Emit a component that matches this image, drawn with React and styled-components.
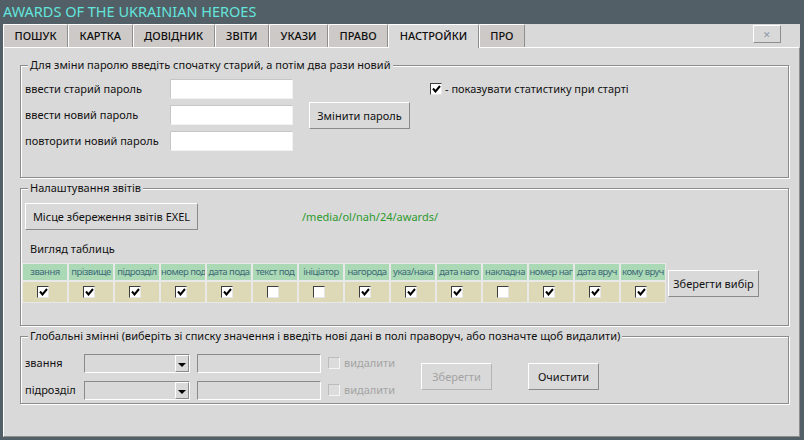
import React from "react";
import styled, { createGlobalStyle } from "styled-components";

const GlobalStyle = createGlobalStyle`
  html, body {
    margin: 0;
    padding: 0;
    background: #525f66;
  }
  body {
    font-family: "Noto Sans", "Open Sans", sans-serif;
    font-size: 11px;
    color: #111111;
  }
  * {
    box-sizing: border-box;
  }
`;

const Window = styled.div`
  width: 804px;
  height: 440px;
  background: #525f66;
  display: flex;
  flex-direction: column;
  padding: 0 4px 3px 3px;
`;

const TitleBar = styled.div`
  height: 24px;
  line-height: 23px;
  color: #63e4dc;
  font-size: 14.5px;
  white-space: nowrap;
`;

const Notebook = styled.div`
  flex: 1;
  display: flex;
  flex-direction: column;
  background: #d9d9d9;
`;

const TabStrip = styled.div`
  display: flex;
  align-items: flex-start;
  height: 23px;
`;

const Tab = styled.div`
  position: relative;
  z-index: ${(p) => (p.$active ? 1 : 0)};
  height: ${(p) => (p.$active ? 24 : 23)}px;
  padding: 0 10.5px;
  line-height: 21px;
  font-size: 11px;
  font-weight: 500;
  color: #0e0e0e;
  background: ${(p) => (p.$active ? "#d9d9d9" : "#cdc9c6")};
  border-top: 1px solid #ffffff;
  border-left: 1px solid #ffffff;
  border-right: 1px solid #8e8e8e;
  border-radius: 2px 2px 0 0;
  white-space: nowrap;
`;

const CloseButton = styled.div`
  margin: 1px 19px 0 auto;
  width: 28px;
  height: 18px;
  display: flex;
  align-items: center;
  justify-content: center;
  background: #d9d9d9;
  border: 1px solid;
  border-color: #ffffff #8e8e8e #8e8e8e #ffffff;
  color: #8c98a6;
  font-size: 9px;
  line-height: 1;
`;

const Panel = styled.div`
  flex: 1;
  display: flex;
  flex-direction: column;
  gap: 2px;
  padding: 9px 10px 0 16px;
  border: 1px solid;
  border-color: #ffffff #8e8e8e #8e8e8e #ffffff;
`;

const Frame = styled.fieldset`
  margin: 0;
  min-width: 0;
  height: ${(p) => p.$h}px;
  padding: ${(p) => p.$pad};
  border: 1px solid #8c8c8c;
  box-shadow: inset 1px 1px 0 #ffffff, 1px 1px 0 #ffffff;
`;

const Legend = styled.legend`
  margin-left: 3px;
  padding: 0 2px;
  line-height: 16px;
  font-size: 11px;
  background: #d9d9d9;
  white-space: nowrap;
`;

const Label = styled.span`
  font-size: 11px;
  line-height: 20px;
  white-space: nowrap;
  color: ${(p) => (p.$muted ? "#a4a4a4" : "#111111")};
`;

const PasswordGrid = styled.div`
  display: grid;
  grid-template-columns: 145px 123px 137px 1fr;
  grid-template-rows: repeat(3, 20px);
  row-gap: 6px;
  align-items: center;
`;

const Entry = styled.input`
  width: 123px;
  height: 20px;
  padding: 0 2px;
  border: 1px solid;
  border-color: #c6c6c6 #f2f2f2 #f2f2f2 #c6c6c6;
  background: #ffffff;
  font: inherit;
  outline: none;
`;

const Button = styled.div`
  display: inline-flex;
  align-items: center;
  justify-content: center;
  flex: none;
  width: ${(p) => p.$w}px;
  height: 27px;
  background: #d9d9d9;
  border: 1px solid;
  font-size: 11px;
  color: ${(p) => (p.$disabled ? "#a3a3a3" : "#111111")};
  border-color: ${(p) =>
    p.$disabled
      ? "#ffffff #b4b4b4 #b4b4b4 #ffffff"
      : "#ffffff #8a8a8a #8a8a8a #ffffff"};
  white-space: nowrap;
`;

const ChangeButton = styled(Button)`
  grid-column: 3;
  grid-row: 2;
  margin-left: 16px;
`;

const CheckRow = styled.label`
  grid-column: 4;
  grid-row: 1;
  display: flex;
  align-items: center;
  gap: 3px;
`;

const Box = styled.span`
  display: inline-flex;
  align-items: center;
  justify-content: center;
  flex: none;
  width: 12px;
  height: 12px;
  border: 1px solid;
  border-color: ${(p) =>
    p.$disabled
      ? "#bcbcbc #f4f4f4 #f4f4f4 #bcbcbc"
      : "#3c3c3c #e6e6e6 #e6e6e6 #3c3c3c"};
  background: ${(p) => (p.$disabled ? "#dcdcdc" : "#ffffff")};
`;

const CheckBox = ({ checked, disabled }) => (
  <Box $disabled={disabled}>
    {checked && (
      <svg width="9" height="8" viewBox="0 0 9 8">
        <path d="M1 3.5 L3.5 6.5 L8 1" fill="none" stroke="#000" strokeWidth="2" />
      </svg>
    )}
  </Box>
);

const ReportTop = styled.div`
  display: flex;
  align-items: center;
  gap: 104px;
`;

const PathText = styled.span`
  color: #2c9a2c;
  font-size: 11px;
`;

const SectionTitle = styled.div`
  margin: 11px 0 6px 5px;
  line-height: 16px;
  font-size: 11px;
`;

const ColumnsRow = styled.div`
  display: flex;
  align-items: center;
  margin-left: -3px;
  gap: 2px;
`;

const ColumnsGrid = styled.div`
  display: grid;
  grid-template-columns: repeat(14, 46px);
  grid-template-rows: 18px 22px;
`;

const HeadCell = styled.div`
  background: #abd8b5;
  border: 1px solid #e8e8e8;
  font-size: 9.5px;
  letter-spacing: -0.5px;
  line-height: 15px;
  color: #3d6b78;
  text-align: center;
  white-space: nowrap;
  overflow: hidden;
`;

const CheckCell = styled.div`
  display: flex;
  align-items: center;
  justify-content: center;
  padding-right: 4px;
  background: #ddd8b6;
  border: 1px solid #e8e8e8;
`;

const GlobalBody = styled.div`
  display: flex;
  align-items: center;
`;

const GlobalGrid = styled.div`
  display: grid;
  grid-template-columns: 52px 106px 124px 80px;
  column-gap: 7px;
  row-gap: 7px;
  align-items: center;
`;

const Combo = styled.div`
  display: flex;
  height: 19px;
  border: 1px solid;
  border-color: #8a8a8a #ffffff #ffffff #8a8a8a;
  background: #d9d9d9;
`;

const ComboField = styled.div`
  flex: 1;
`;

const ComboArrow = styled.div`
  width: 14px;
  display: flex;
  align-items: flex-end;
  justify-content: center;
  padding-bottom: 4px;
  border: 1px solid;
  border-color: #ffffff #8a8a8a #8a8a8a #ffffff;

  &::after {
    content: "";
    border-left: 4px solid transparent;
    border-right: 4px solid transparent;
    border-top: 4px solid #000000;
  }
`;

const DisabledEntry = styled.div`
  height: 19px;
  border: 1px solid;
  border-color: #8a8a8a #ffffff #ffffff #8a8a8a;
  background: #d9d9d9;
`;

const DeleteCheck = styled.div`
  display: flex;
  align-items: center;
  gap: 4px;
`;

const GlobalButtons = styled.div`
  display: flex;
  gap: 36px;
  margin-left: 13px;
`;

const tabs = ["ПОШУК", "КАРТКА", "ДОВІДНИК", "ЗВІТИ", "УКАЗИ", "ПРАВО", "НАСТРОЙКИ", "ПРО"];

const columns = [
  ["звання", true],
  ["прізвище", true],
  ["підрозділ", true],
  ["номер под", true],
  ["дата пода", true],
  ["текст под", false],
  ["ініціатор", false],
  ["нагорода", true],
  ["указ/нака", true],
  ["дата наго", true],
  ["накладна", false],
  ["номер наг", true],
  ["дата вруч", true],
  ["кому вруч", true],
];

const passwordRows = ["ввести старий пароль", "ввести новий пароль", "повторити новий пароль"];

export default function App() {
  return (
    <>
      <GlobalStyle />
      <Window>
        <TitleBar>AWARDS OF THE UKRAINIAN HEROES</TitleBar>
        <Notebook>
          <TabStrip>
            {tabs.map((t) => (
              <Tab key={t} $active={t === "НАСТРОЙКИ"}>
                {t}
              </Tab>
            ))}
            <CloseButton>✕</CloseButton>
          </TabStrip>
          <Panel>
            <Frame $h={121} $pad="6px 4px 0 4px">
              <Legend>Для зміни паролю введіть спочатку старий, а потім два рази новий</Legend>
              <PasswordGrid>
                {passwordRows.map((r, i) => (
                  <React.Fragment key={r}>
                    <Label style={{ gridRow: i + 1, gridColumn: 1 }}>{r}</Label>
                    <Entry style={{ gridRow: i + 1, gridColumn: 2 }} />
                  </React.Fragment>
                ))}
                <ChangeButton $w={101}>Змінити пароль</ChangeButton>
                <CheckRow>
                  <CheckBox checked />
                  <Label>- показувати статистику при старті</Label>
                </CheckRow>
              </PasswordGrid>
            </Frame>

            <Frame $h={146} $pad="7px 4px 0 4px">
              <Legend>Налаштування звітів</Legend>
              <ReportTop>
                <Button $w={173}>Місце збереження звітів EXEL</Button>
                <PathText>/media/ol/nah/24/awards/</PathText>
              </ReportTop>
              <SectionTitle>Вигляд таблиць</SectionTitle>
              <ColumnsRow>
                <ColumnsGrid>
                  {columns.map(([name]) => (
                    <HeadCell key={name}>{name}</HeadCell>
                  ))}
                  {columns.map(([name, on]) => (
                    <CheckCell key={name + "-c"}>
                      <CheckBox checked={on} />
                    </CheckCell>
                  ))}
                </ColumnsGrid>
                <Button $w={91}>Зберегти вибір</Button>
              </ColumnsRow>
            </Frame>

            <Frame $h={76} $pad="9px 4px 0 4px">
              <Legend>
                Глобальні змінні (виберіть зі списку значення і введіть нові дані в полі праворуч, або позначте щоб видалити)
              </Legend>
              <GlobalBody>
                <GlobalGrid>
                  {["звання", "підрозділ"].map((r) => (
                    <React.Fragment key={r}>
                      <Label>{r}</Label>
                      <Combo>
                        <ComboField />
                        <ComboArrow />
                      </Combo>
                      <DisabledEntry />
                      <DeleteCheck>
                        <CheckBox disabled />
                        <Label $muted>видалити</Label>
                      </DeleteCheck>
                    </React.Fragment>
                  ))}
                </GlobalGrid>
                <GlobalButtons>
                  <Button $w={71} $disabled>
                    Зберегти
                  </Button>
                  <Button $w={71}>Очистити</Button>
                </GlobalButtons>
              </GlobalBody>
            </Frame>
          </Panel>
        </Notebook>
      </Window>
    </>
  );
}
